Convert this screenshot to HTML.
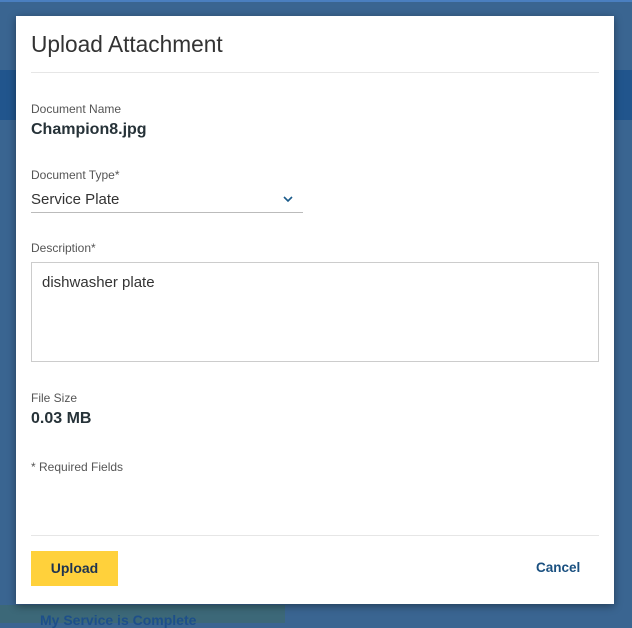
<!DOCTYPE html>
<html><head><meta charset="utf-8"><style>
*{margin:0;padding:0;box-sizing:border-box}
body{width:632px;height:623px;overflow:hidden;background:#3a6591;font-family:"Liberation Sans",sans-serif;position:relative;color:#222}
.bg{position:absolute}
.modal{position:absolute;left:16px;top:16px;width:598px;height:588px;background:#fff;box-shadow:0 2px 8px rgba(0,0,0,.4)}
.a{position:absolute;white-space:nowrap}
.lbl{font-size:12px;color:#555}
.val{font-size:16px;font-weight:bold;color:#263238}
</style></head><body>
<div class="bg" style="left:0;top:0;width:632px;height:2px;background:#4a7fc0"></div>
<div class="bg" style="left:0;top:70px;width:632px;height:50px;background:#21558d"></div>
<div class="bg" style="left:0;top:605px;width:285px;height:18px;background:#3c6878"></div>
<div class="bg" style="left:40px;top:612px;color:#1d4f8a;font-size:14px;font-weight:bold">My Service is Complete</div>
<div class="modal">
<div class="a" style="left:15px;top:15px;font-size:22.7px;color:#333">Upload Attachment</div>
<div class="a" style="left:15px;top:56px;width:568px;height:1px;background:#e6e6e6"></div>
<div class="a lbl" style="left:15px;top:86px">Document Name</div>
<div class="a val" style="left:15px;top:105px">Champion8.jpg</div>
<div class="a lbl" style="left:15px;top:152px">Document Type*</div>
<div class="a" style="left:15px;top:175px;font-size:15px;color:#333">Service Plate</div>
<svg class="a" style="left:267px;top:179px" width="10" height="8" viewBox="0 0 10 8"><path d="M1 2l4 4 4-4" stroke="#1a5a8a" stroke-width="1.6" fill="none"/></svg>
<div class="a" style="left:15px;top:196px;width:272px;height:1px;background:#bbb"></div>
<div class="a lbl" style="left:15px;top:225px">Description*</div>
<div class="a" style="left:15px;top:246px;width:568px;height:100px;border:1px solid #ccc"></div>
<div class="a" style="left:26px;top:258px;font-size:15px;color:#333">dishwasher plate</div>
<div class="a lbl" style="left:15px;top:375px">File Size</div>
<div class="a val" style="left:15px;top:394px">0.03 MB</div>
<div class="a lbl" style="left:15px;top:444px">* Required Fields</div>
<div class="a" style="left:15px;top:519px;width:568px;height:1px;background:#e6e6e6"></div>
<div class="a" style="left:15px;top:535px;width:87px;height:35px;background:#ffd13b;color:#1e3350;font-weight:bold;font-size:14px;text-align:center;line-height:35px">Upload</div>
<div class="a" style="left:520px;top:544px;color:#1a5080;font-weight:bold;font-size:13.5px">Cancel</div>
</div>
</body></html>
